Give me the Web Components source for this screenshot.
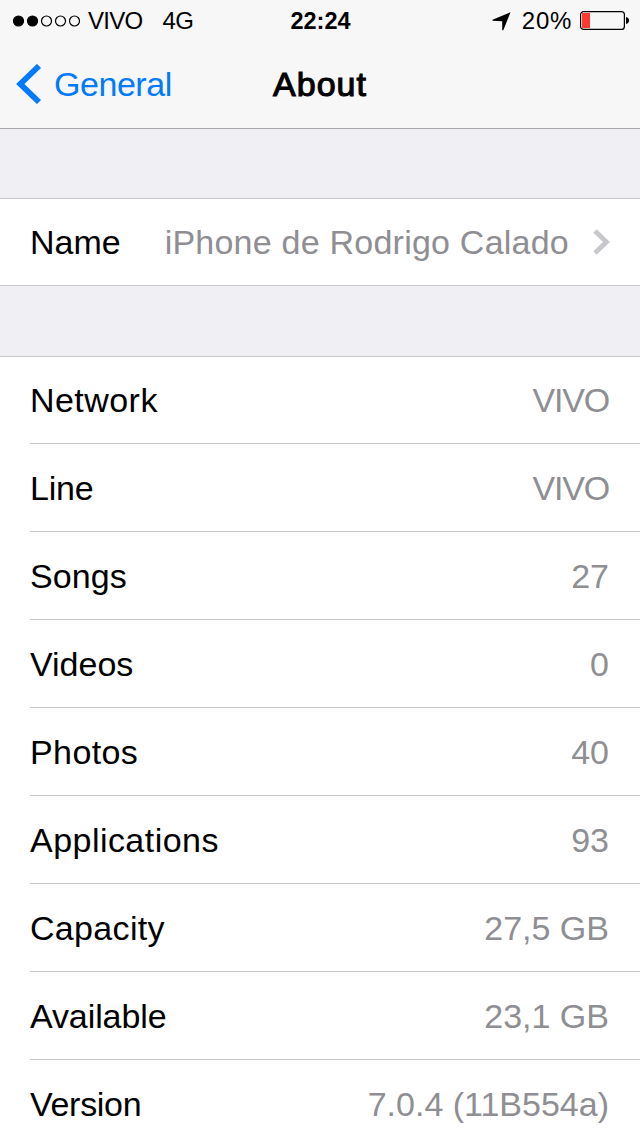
<!DOCTYPE html>
<html lang="en">
<head>
<meta charset="utf-8">
<title>About</title>
<style>
    body {
        margin: 0;
        height: 1136px;
        overflow: hidden;
        background: #efeff4;
        color: #000;
        font-family: "Liberation Sans", Arial, sans-serif;
        font-size: 34px;
    }
    settings-group {
        margin-top: 69px;
    }
    settings-group + settings-group {
        margin-top: 70px;
    }
</style>
</head>
<body>
<status-bar carrier="VIVO" network="4G" time="22:24" battery="20" signal="2"></status-bar>
<nav-bar back="General">About</nav-bar>

<settings-group>
    <settings-row label="Name" link style="--value-spacing: 0.23px">iPhone de Rodrigo Calado</settings-row>
</settings-group>

<settings-group>
    <settings-row label="Network" style="--label-spacing: 0.45px; --value-spacing: -1.2px">VIVO</settings-row>
    <settings-row label="Line" style="--label-spacing: -0.2px; --value-spacing: -1.2px">VIVO</settings-row>
    <settings-row label="Songs" style="--label-spacing: 0.1px">27</settings-row>
    <settings-row label="Videos">0</settings-row>
    <settings-row label="Photos" style="--label-spacing: 0.4px">40</settings-row>
    <settings-row label="Applications" style="--label-spacing: 0.46px">93</settings-row>
    <settings-row label="Capacity" style="--label-spacing: 0.32px">27,5 GB</settings-row>
    <settings-row label="Available" style="--label-spacing: -0.1px">23,1 GB</settings-row>
    <settings-row label="Version" style="--label-spacing: -0.3px">7.0.4 (11B554a)</settings-row>
</settings-group>

<script>
// status-bar
class StatusBar extends HTMLElement {
    constructor() {
        super();
        this.attachShadow({ mode: 'open' });
        this.shadowRoot.innerHTML = `
          <style>
              :host {
                  display: grid;
                  grid-template-columns: 1fr auto 1fr;
                  align-items: center;
                  height: 38px;
                  padding: 2px 11px 0 12px;
                  background: #f7f7f7;
                  font-size: 24px;
                  line-height: 38px;
              }
              .left, .right {
                  display: flex;
                  align-items: center;
              }
              .right {
                  justify-content: flex-end;
              }
              svg {
                  display: block;
                  flex: none;
              }
              .carrier {
                  margin-left: 8px;
                  letter-spacing: -0.7px;
              }
              .network {
                  margin-left: 20px;
                  letter-spacing: -0.6px;
              }
              .time {
                  font-weight: bold;
                  font-size: 23.5px;
              }
              .battery-text {
                  margin: 0 8px 0 11px;
                  letter-spacing: 0.7px;
              }
          </style>
          <div class="left">
              <svg class="signal" width="68" height="12" viewBox="0 0 68 12"></svg>
              <span class="carrier"></span>
              <span class="network"></span>
          </div>
          <span class="time"></span>
          <div class="right">
              <svg width="19" height="19" viewBox="0 0 19 19"><path d="M18.500 .3 11.300 18.200H10.200V9.300L.5 8.700V7.800z"/></svg>
              <span class="battery-text"></span>
              <svg width="49" height="20" viewBox="0 0 49 20">
                  <rect x=".6" y=".6" width="43.800" height="17.800" rx="3" fill="none" stroke="#000" stroke-width="1.200"/>
                  <rect class="level" x="2" y="2" width="8" height="15" fill="#ff3b30"/>
                  <path d="M46 6c4 .8 4 6.200 0 7z"/>
              </svg>
          </div>
      `;
    }

    connectedCallback() {
        const root = this.shadowRoot;
        root.querySelector('.carrier').textContent = this.getAttribute('carrier');
        root.querySelector('.network').textContent = this.getAttribute('network');
        root.querySelector('.time').textContent = this.getAttribute('time');

        const battery = Number(this.getAttribute('battery'));
        root.querySelector('.battery-text').textContent = battery + '%';
        root.querySelector('.level').setAttribute('width', battery * 0.4);

        // five dots, the first ones filled
        const signal = Number(this.getAttribute('signal'));
        let dots = '';
        for (let i = 0; i < 5; i++) {
            dots += `<circle cx="${6.5 + i * 14}" cy="6" r="5" fill="${i < signal ? '#000' : 'none'}" stroke="#000" stroke-width="1.2"/>`;
        }
        root.querySelector('.signal').innerHTML = dots;
    }
}

// nav-bar
class NavBar extends HTMLElement {
    constructor() {
        super();
        this.attachShadow({ mode: 'open' });
        this.shadowRoot.innerHTML = `
          <style>
              :host {
                  display: grid;
                  grid-template-columns: 1fr auto 1fr;
                  align-items: center;
                  box-sizing: border-box;
                  height: 89px;
                  padding: 0 16px;
                  background: #f7f7f7;
                  border-bottom: 1px solid #a7a7ac;
              }
              .back {
                  display: flex;
                  align-items: center;
                  color: #007aff;
                  gap: 13px;
              }
              .back-text {
                  letter-spacing: -0.45px;
              }
              .title {
                  -webkit-text-stroke: 1.1px #000;
                  letter-spacing: 1px;
              }
          </style>
          <div class="back">
              <svg width="25" height="40" viewBox="0 0 25 40"><path d="M23 2 4.300 20 23 38" fill="none" stroke="#007aff" stroke-width="5.800"/></svg>
              <span class="back-text"></span>
          </div>
          <div class="title"><slot></slot></div>
      `;
    }

    connectedCallback() {
        this.shadowRoot.querySelector('.back-text').textContent = this.getAttribute('back');
    }
}

// settings-group
class SettingsGroup extends HTMLElement {
    constructor() {
        super();
        this.attachShadow({ mode: 'open' });
        this.shadowRoot.innerHTML = `
          <style>
              :host {
                  display: block;
                  background: #fff;
                  border-top: 1px solid #c8c7cc;
                  border-bottom: 1px solid #c8c7cc;
              }
              ::slotted(settings-row:last-child) {
                  --divider: transparent;
              }
          </style>
          <slot></slot>
      `;
    }
}

// settings-row
class SettingsRow extends HTMLElement {
    constructor() {
        super();
        this.attachShadow({ mode: 'open' });
        this.shadowRoot.innerHTML = `
          <style>
              :host {
                  display: block;
                  box-sizing: border-box;
                  height: 88px;
                  padding-left: 30px;
              }
              :host(:first-child) {
                  height: 87px;
              }
              :host(:only-child) {
                  height: 86px;
              }
              .row {
                  display: flex;
                  align-items: center;
                  justify-content: space-between;
                  box-sizing: border-box;
                  height: 100%;
                  padding: 1px 31px 0 0;
                  border-bottom: 1px solid var(--divider, #c8c7cc);
                  line-height: 40px;
                  white-space: nowrap;
              }
              :host(:first-child) .row {
                  padding-top: 0;
              }
              :host([link]) .row {
                  padding: 1px 30px 0 0;
              }
              .label {
                  letter-spacing: var(--label-spacing, 0);
              }
              .value {
                  display: flex;
                  align-items: center;
                  gap: 24px;
                  color: #8e8e93;
                  letter-spacing: var(--value-spacing, 0);
              }
              .chevron {
                  display: none;
              }
              :host([link]) .chevron {
                  display: block;
              }
          </style>
          <div class="row">
              <span class="label"></span>
              <span class="value">
                  <span><slot></slot></span>
                  <svg class="chevron" width="17" height="26" viewBox="0 0 17 26"><path d="M2 2l11.500 11L2 24" fill="none" stroke="#c7c7cc" stroke-width="4.800"/></svg>
              </span>
          </div>
      `;
    }

    connectedCallback() {
        this.shadowRoot.querySelector('.label').textContent = this.getAttribute('label');
    }
}

customElements.define('status-bar', StatusBar);
customElements.define('nav-bar', NavBar);
customElements.define('settings-group', SettingsGroup);
customElements.define('settings-row', SettingsRow);
</script>
</body>
</html>
